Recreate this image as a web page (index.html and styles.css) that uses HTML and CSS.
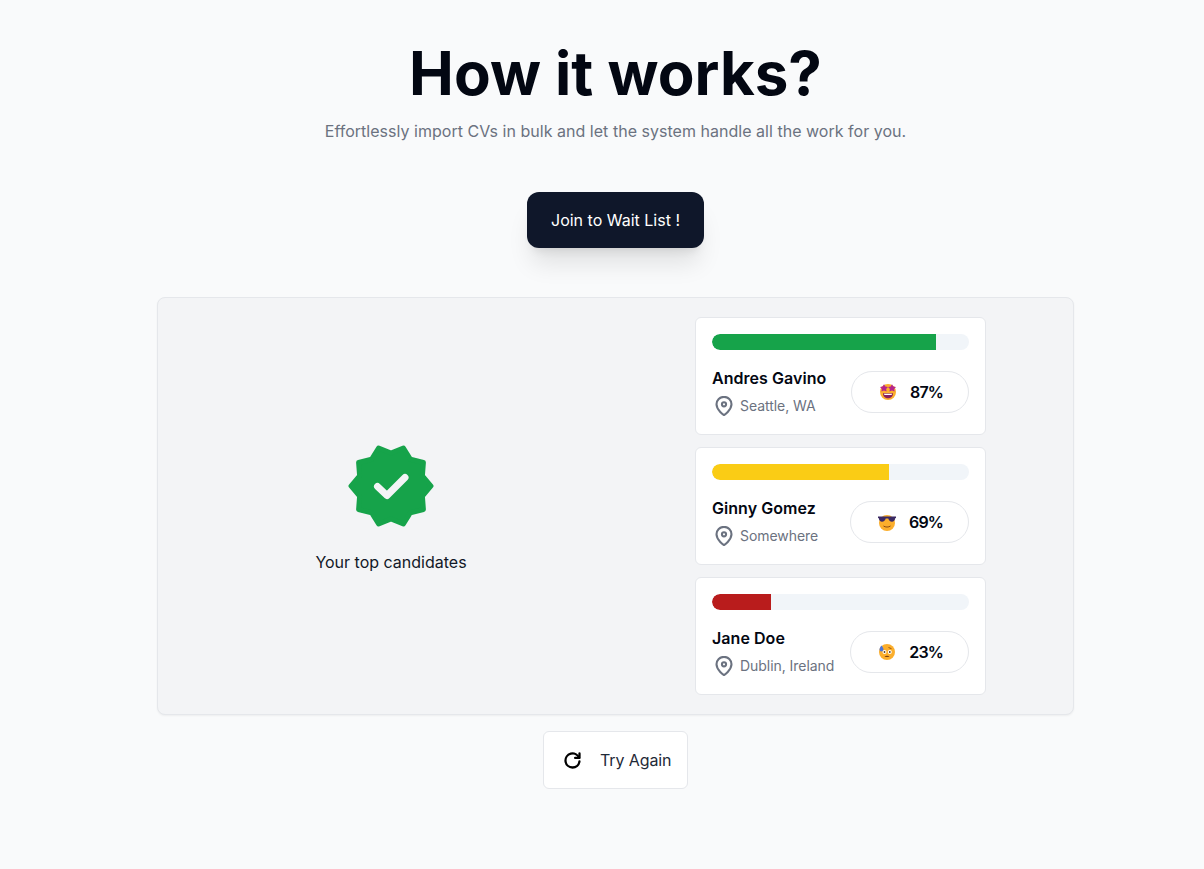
FILE: index.html
```html
<!DOCTYPE html>
<html lang="en">
<head>
<meta charset="utf-8">
<title>How it works?</title>
<link rel="stylesheet" href="styles.css">
</head>
<body>
<main class="page">
  <h1 class="title">How it works?</h1>
  <p class="subtitle">Effortlessly import CVs in bulk and let the system handle all the work for you.</p>
  <button class="cta">Join to Wait List !</button>
  <section class="panel">
    <div class="result">
      <svg class="badge" viewBox="-44 -44 88 88" aria-hidden="true">
        <polygon class="badge-shape" points="40,0 31.4,10.2 32.4,23.5 19.4,26.7 12.4,38 0,33 -12.4,38 -19.4,26.7 -32.4,23.5 -31.4,10.2 -40,0 -31.4,-10.2 -32.4,-23.5 -19.4,-26.7 -12.4,-38 0,-33 12.4,-38 19.4,-26.7 32.4,-23.5 31.4,-10.2"/>
        <polyline class="badge-check" points="-13.500,0.5 -4,9.500 14,-8.500"/>
      </svg>
      <p class="result-label">Your top candidates</p>
    </div>
    <div class="cards">
      <article class="card">
        <div class="track"><div class="fill fill-green" style="width:87%"></div></div>
        <div class="card-row">
          <div class="person">
            <div class="name">Andres Gavino</div>
            <div class="place">
              <svg class="pin" viewBox="0 0 24 24" aria-hidden="true"><path d="M21 10c0 7-9 13-9 13s-9-6-9-13a9 9 0 0 1 18 0z"/><circle cx="12" cy="10" r="2.500"/></svg>
              <span>Seattle, WA</span>
            </div>
          </div>
          <div class="score">
            <span class="emoji-box">
              <svg class="emoji" viewBox="0 0 16 16" aria-hidden="true">
                <circle cx="8" cy="8" r="8" fill="#fbae2c"/>
                <path d="M4 .3l1.300 2.300 2.700.4-1.900 1.900.5 2.700L4 6.400 1.400 7.600l.5-2.700L0 3l2.700-.4z" fill="#b5268c"/>
                <path d="M12 .3l1.300 2.300 2.700.4-1.900 1.900.5 2.700L12 6.400 9.400 7.600l.5-2.700L8 3l2.700-.4z" fill="#b5268c"/>
                <path d="M3 9.200h10c0 3.200-2.200 5-5 5s-5-1.800-5-5z" fill="#8a1f5a"/>
                <path d="M4 9.700h8l-.4 1.300H4.400z" fill="#fff"/>
              </svg>
            </span>
            <span class="percent">87%</span>
          </div>
        </div>
      </article>
      <article class="card">
        <div class="track"><div class="fill fill-yellow" style="width:69%"></div></div>
        <div class="card-row">
          <div class="person">
            <div class="name">Ginny Gomez</div>
            <div class="place">
              <svg class="pin" viewBox="0 0 24 24" aria-hidden="true"><path d="M21 10c0 7-9 13-9 13s-9-6-9-13a9 9 0 0 1 18 0z"/><circle cx="12" cy="10" r="2.500"/></svg>
              <span>Somewhere</span>
            </div>
          </div>
          <div class="score">
            <span class="emoji-box">
              <svg class="emoji-wide" viewBox="0 0 18 17" aria-hidden="true">
                <circle cx="9" cy="9" r="8" fill="#fbae2c"/>
                <path d="M0 2.500h18v1.500l-.8.3c-.3 2.200-1.500 3.400-3.200 3.400-1.900 0-3.300-1.200-3.700-3.100H7.700C7.300 6.500 5.900 7.700 4 7.700 2.300 7.700 1.100 6.500.8 4.300L0 4z" fill="#3b2a63"/>
                <path d="M5.500 12c1.800 1.400 5.200 1.400 7 0" fill="none" stroke="#8a4b12" stroke-width="1"/>
              </svg>
            </span>
            <span class="percent">69%</span>
          </div>
        </div>
      </article>
      <article class="card">
        <div class="track"><div class="fill fill-red" style="width:23%"></div></div>
        <div class="card-row">
          <div class="person">
            <div class="name">Jane Doe</div>
            <div class="place">
              <svg class="pin" viewBox="0 0 24 24" aria-hidden="true"><path d="M21 10c0 7-9 13-9 13s-9-6-9-13a9 9 0 0 1 18 0z"/><circle cx="12" cy="10" r="2.500"/></svg>
              <span>Dublin, Ireland</span>
            </div>
          </div>
          <div class="score">
            <span class="emoji-box">
              <svg class="emoji" viewBox="0 0 16 16" aria-hidden="true">
                <circle cx="8" cy="8" r="8" fill="#fbae2c"/>
                <path d="M2.500 1.500c1 1.500 2 2.600 2 3.900a2 2 0 0 1-4 0c0-1.300 1-2.400 2-3.900z" fill="#4f77d6"/>
                <circle cx="5.500" cy="8" r="2" fill="#fff"/>
                <circle cx="10.800" cy="8" r="2" fill="#fff"/>
                <circle cx="5.500" cy="8" r=".9" fill="#5a3a1a"/>
                <circle cx="10.800" cy="8" r=".9" fill="#5a3a1a"/>
                <path d="M9.500 3.500l3 1.200" stroke="#8a4b12" stroke-width=".9"/>
                <path d="M5.500 13c1.200-1.600 3.800-1.600 5 0z" fill="#7a3f10"/>
              </svg>
            </span>
            <span class="percent">23%</span>
          </div>
        </div>
      </article>
    </div>
  </section>
  <button class="retry">
    <svg class="retry-icon" viewBox="0 0 24 24" aria-hidden="true"><path d="M19.933 13.041a8 8 0 1 1-9.925-8.788c3.899-1 7.935 1.007 9.425 4.747"/><path d="M20 4v5h-5"/></svg>
    <span>Try Again</span>
  </button>
</main>
</body>
</html>
```
FILE: styles.css
```css
* { box-sizing: border-box; }
html, body { margin: 0; padding: 0; }
body {
  background: #f9fafb;
  font-family: Inter, "Liberation Sans", sans-serif;
  color: #030712;
  overflow: hidden;
  height: 869px;
}
.page {
  display: flex;
  flex-direction: column;
  align-items: center;
  padding: 37px 0 0 27px;
}
.title {
  margin: 0;
  font-size: 60px;
  line-height: 72px;
  font-weight: 700;
  color: #030712;
}
.subtitle {
  margin: 10px 0 0;
  font-size: 16px;
  line-height: 24px;
  letter-spacing: .025px;
  color: #6b7280;
}
.cta {
  margin-top: 49px;
  width: 177px;
  height: 56px;
  border: 0;
  border-radius: 12px;
  background: #0f172a;
  color: #fff;
  font: 400 16px/24px Inter, sans-serif;
  box-shadow: 0 20px 25px -5px rgba(0,0,0,.1), 0 8px 10px -6px rgba(0,0,0,.1);
}
.panel {
  margin-top: 49px;
  width: 917px;
  height: 418px;
  display: flex;
  align-items: stretch;
  background: #f3f4f6;
  border: 1px solid #e5e7eb;
  border-radius: 8px;
  box-shadow: 0 1px 2px rgba(0,0,0,.05);
}
.result {
  width: 466px;
  display: flex;
  flex-direction: column;
  align-items: center;
  justify-content: center;
  padding-top: 4px;
}
.badge { width: 88px; height: 88px; display: block; }
.badge-shape { fill: #16a34a; stroke: #16a34a; stroke-width: 5; stroke-linejoin: round; }
.badge-check { fill: none; stroke: #f3f4f6; stroke-width: 7; stroke-linecap: round; stroke-linejoin: round; }
.result-label {
  margin: 20px 0 0;
  font-size: 16px;
  line-height: 24px;
  color: #111827;
}
.cards {
  margin-left: 71px;
  padding-top: 19px;
  width: 291px;
  display: flex;
  flex-direction: column;
  gap: 12px;
}
.card {
  height: 118px;
  padding: 16px;
  background: #fff;
  border: 1px solid #e5e7eb;
  border-radius: 6px;
}
.track {
  height: 16px;
  border-radius: 8px;
  background: #f1f5f9;
  overflow: hidden;
}
.fill { height: 100%; border-radius: 8px 0 0 8px; }
.fill-green { background: #16a34a; }
.fill-yellow { background: #facc15; }
.fill-red { background: #b91c1c; }
.card-row {
  margin-top: 20px;
  display: flex;
  align-items: center;
  justify-content: space-between;
  height: 44px;
}
.person { display: flex; flex-direction: column; margin-bottom: 2px; }
.name {
  font-size: 16px;
  line-height: 24px;
  font-weight: 600;
  letter-spacing: .05px;
  color: #030712;
}
.place {
  margin-top: 6px;
  display: flex;
  align-items: center;
  gap: 6px;
  padding-left: 2px;
  font-size: 14px;
  line-height: 20px;
  letter-spacing: -.05px;
  color: #6b7280;
}
.pin { width: 20px; height: 20px; fill: none; stroke: #6b7280; stroke-width: 2.5; stroke-linecap: round; stroke-linejoin: round; }
.score {
  height: 42px;
  display: flex;
  align-items: center;
  gap: 13px;
  padding: 0 25px 0 27px;
  background: #fff;
  border: 1px solid #e5e7eb;
  border-radius: 21px;
}
.emoji-box { width: 18px; height: 18px; display: flex; align-items: center; justify-content: center; }
.emoji { width: 16px; height: 16px; display: block; }
.emoji-wide { width: 18px; height: 17px; display: block; }
.percent { font-size: 16px; line-height: 24px; font-weight: 600; letter-spacing: -.85px; color: #030712; }
.retry {
  margin-top: 16px;
  width: 145px;
  height: 58px;
  display: flex;
  align-items: center;
  gap: 17.5px;
  padding: 0 0 0 17.5px;
  background: #fff;
  border: 1px solid #e5e7eb;
  border-radius: 6px;
  font: 400 16px/24px Inter, sans-serif;
  letter-spacing: -.1px;
  color: #1f2937;
}
.retry-icon { width: 21px; height: 21px; fill: none; stroke: #000; stroke-width: 2.6; stroke-linecap: round; stroke-linejoin: round; }
```
